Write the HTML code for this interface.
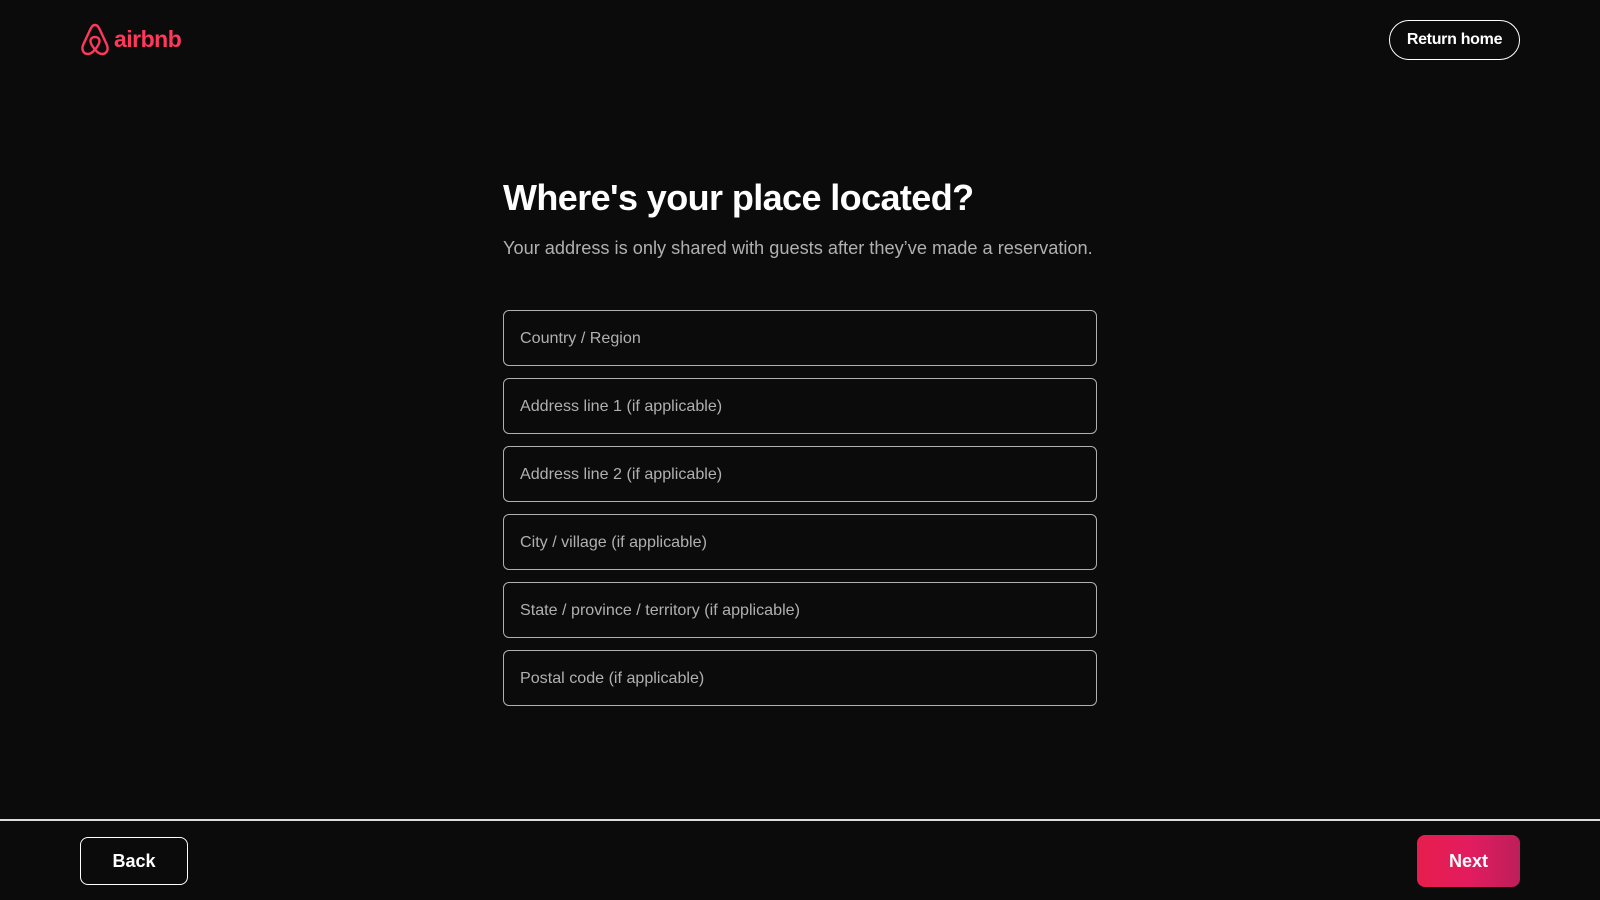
<!DOCTYPE html>
<html><head><style>
*{box-sizing:border-box;margin:0;padding:0}
body{width:1600px;height:900px;background:#0b0b0b;font-family:"Liberation Sans",Arial,sans-serif;color:#fff;position:relative;overflow:hidden}
.logo{position:absolute;left:80px;top:23px;display:flex;align-items:center;color:#ff385c;font-weight:bold;font-size:23px;letter-spacing:-0.5px}
.logo svg{margin-right:4px}
.rh{position:absolute;left:1389px;top:20px;width:131px;height:40px;border:1px solid #fff;border-radius:20px;font-weight:bold;font-size:16px;display:flex;align-items:center;justify-content:center;letter-spacing:-0.3px}
h1{position:absolute;left:503px;top:177px;font-size:36px;font-weight:bold;letter-spacing:-0.6px}
.sub{position:absolute;left:503px;top:238px;font-size:18.2px;color:#b0b0b0}
.in{position:absolute;left:503px;width:594px;height:56px;border:1px solid #b0b0b0;border-radius:6px;font-size:16.1px;color:#b0b0b0;padding-left:16px;padding-top:1px;display:flex;align-items:center}
.line{position:absolute;left:0;top:819px;width:1600px;height:2px;background:#ddd}
.back{position:absolute;left:80px;top:837px;width:108px;height:48px;border:1px solid #fff;border-radius:8px;font-weight:bold;font-size:18px;display:flex;align-items:center;justify-content:center}
.next{position:absolute;left:1417px;top:835px;width:103px;height:52px;border-radius:8px;background:linear-gradient(90deg,#e61e4d,#e31c5f 50%,#bd1e59);font-weight:bold;font-size:18px;display:flex;align-items:center;justify-content:center}
</style></head><body>
<div class="logo"><svg width="30" height="33" viewBox="0 0 30 33"><path d="M15 2C12.5 2 11.5 4 10 7L3.5 21C1 26 3 31 8 31C11 31 13 29 15 26.5C17 29 19 31 22 31C27 31 29 26 26.5 21L20 7C18.5 4 17.5 2 15 2ZM15 26.5C12 23 10.5 20 10.5 18C10.5 15.5 12.5 14 15 14C17.5 14 19.5 15.5 19.5 18C19.5 20 18 23 15 26.5Z" fill="none" stroke="#ff385c" stroke-width="2.4" stroke-linejoin="round"/></svg>airbnb</div>
<div class="rh">Return home</div>
<h1>Where's your place located?</h1>
<div class="sub">Your address is only shared with guests after they’ve made a reservation.</div>
<div class="in" style="top:310px">Country / Region</div>
<div class="in" style="top:378px">Address line 1 (if applicable)</div>
<div class="in" style="top:446px">Address line 2 (if applicable)</div>
<div class="in" style="top:514px">City / village (if applicable)</div>
<div class="in" style="top:582px">State / province / territory (if applicable)</div>
<div class="in" style="top:650px">Postal code (if applicable)</div>
<div class="line"></div>
<div class="back">Back</div>
<div class="next">Next</div>
</body></html>
